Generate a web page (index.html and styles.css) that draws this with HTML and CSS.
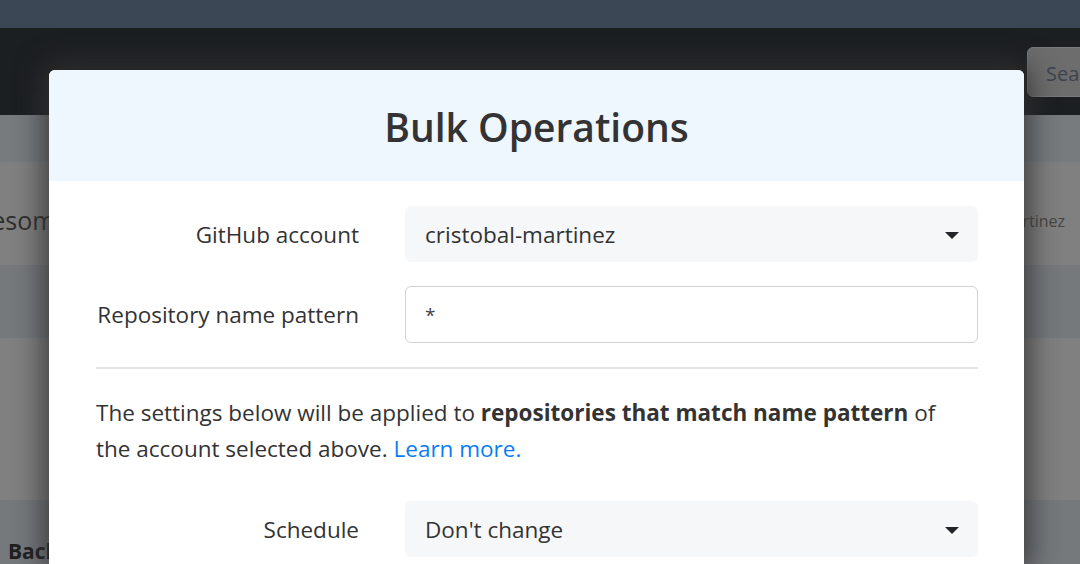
FILE: index.html
```html
<!DOCTYPE html>
<html lang="en">
<head>
<meta charset="utf-8">
<title>Bulk Operations</title>
<link rel="stylesheet" href="styles.css">
</head>
<body>
<div class="page">
  <div class="banner"></div>
  <div class="navbar">
    <div class="search">Search</div>
  </div>
  <div class="subnav"></div>
  <div class="title-row">
    <span class="project">Awesome</span>
    <span class="owner">cristobal-martinez</span>
  </div>
  <div class="band"></div>
  <div class="blank"></div>
  <div class="band band-last"><span class="backups">Backups</span></div>
</div>

<div class="modal">
  <div class="modal-header">
    <h1 class="modal-title">Bulk Operations</h1>
  </div>
  <div class="modal-body">
    <div class="form-row">
      <label class="form-label">GitHub account</label>
      <div class="select">
        <span>cristobal-martinez</span>
        <svg class="caret" width="14" height="7" viewBox="0 0 14 7"><path d="M0 0h14L7 7z" fill="#212529"/></svg>
      </div>
    </div>
    <div class="form-row">
      <label class="form-label">Repository name pattern</label>
      <div class="input"><span>*</span></div>
    </div>
    <hr class="divider">
    <p class="note">The settings below will be applied to <strong>repositories that match name pattern</strong> of the account selected above. <a href="#" class="link">Learn more.</a></p>
    <div class="form-row form-row-sched">
      <label class="form-label">Schedule</label>
      <div class="select">
        <span>Don't change</span>
        <svg class="caret" width="14" height="7" viewBox="0 0 14 7"><path d="M0 0h14L7 7z" fill="#212529"/></svg>
      </div>
    </div>
  </div>
</div>
</body>
</html>
```

FILE: styles.css
```css
html, body {
  margin: 0;
  padding: 0;
  height: 564px;
  overflow: hidden;
}
body {
  font-family: "Open Sans", "Noto Sans", sans-serif;
  color: #333;
  background: #808080;
}
.page {
  width: 1080px;
  overflow: hidden;
}
.banner {
  height: 28px;
  background: #3b4754;
}
.navbar {
  height: 87px;
  background: #1c1f22;
  display: flex;
  justify-content: flex-end;
  align-items: flex-start;
  padding-top: 19px;
  box-sizing: border-box;
  overflow: hidden;
}
.search {
  flex: 0 0 120px;
  margin-right: -67px;
  height: 50px;
  box-sizing: border-box;
  border: 1px solid #7a7a7a;
  border-radius: 6px;
  background: #6d6d6d;
  color: #3b4450;
  font-size: 20px;
  line-height: 52px;
  padding-left: 18px;
  white-space: nowrap;
  overflow: hidden;
}
.subnav {
  height: 47px;
  background: #777b7e;
}
.title-row {
  height: 103px;
  display: flex;
  align-items: center;
  justify-content: space-between;
  background: #808080;
  padding-right: 15px;
  overflow: hidden;
}
.project {
  font-size: 25px;
  margin-left: -44px;
  color: #2e2e2e;
  padding-top: 12px;
}
.owner {
  font-size: 16px;
  color: #454545;
  padding-top: 14px;
}
.band {
  height: 73px;
  background: #75797c;
}
.blank {
  height: 162px;
  background: #808080;
}
.band-last {
  height: 64px;
  padding-left: 8px;
  box-sizing: border-box;
  display: flex;
  align-items: flex-end;
}
.backups {
  font-weight: 700;
  font-size: 21px;
  color: #202020;
  line-height: 26px;
}

.modal {
  position: absolute;
  left: 49px;
  top: 70px;
  width: 975px;
  height: 494px;
  background: #fff;
  border-radius: 6px 6px 0 0;
  box-shadow: 0 0 28px 6px rgba(48, 48, 48, 0.85);
  overflow: hidden;
}
.modal-header {
  height: 111px;
  background: #eef6fe;
  display: flex;
  align-items: center;
  justify-content: center;
}
.modal-title {
  margin: 0;
  font-size: 39px;
  font-weight: 600;
  color: #333;
  padding-top: 2px;
}
.modal-body {
  padding: 25px 46px 0 47px;
  font-size: 22.5px;
}
.form-row {
  display: grid;
  grid-template-columns: 263px 1fr;
  column-gap: 46px;
  align-items: center;
  margin-bottom: 24px;
}
.form-label {
  text-align: right;
  color: #333;
}
.select {
  height: 56px;
  background: #f6f7f9;
  border-radius: 6px;
  display: flex;
  align-items: center;
  justify-content: space-between;
  padding: 0 19px 0 20px;
  color: #333;
}
.caret {
  margin-top: 2px;
}
.input {
  height: 57px;
  box-sizing: border-box;
  border: 1px solid #cfd2d9;
  border-radius: 6px;
  display: flex;
  align-items: center;
  padding-left: 19px;
  color: #444;
  font-size: 19px;
}
.divider {
  margin: 0 0 26px;
  border: 0;
  border-top: 2px solid #e5e6e8;
}
.note {
  margin: 0 0 34px;
  padding-right: 20px;
  line-height: 36px;
  color: #333;
}
.note strong {
  font-weight: 700;
}
.link {
  color: #0a7cf5;
  text-decoration: none;
}
```
